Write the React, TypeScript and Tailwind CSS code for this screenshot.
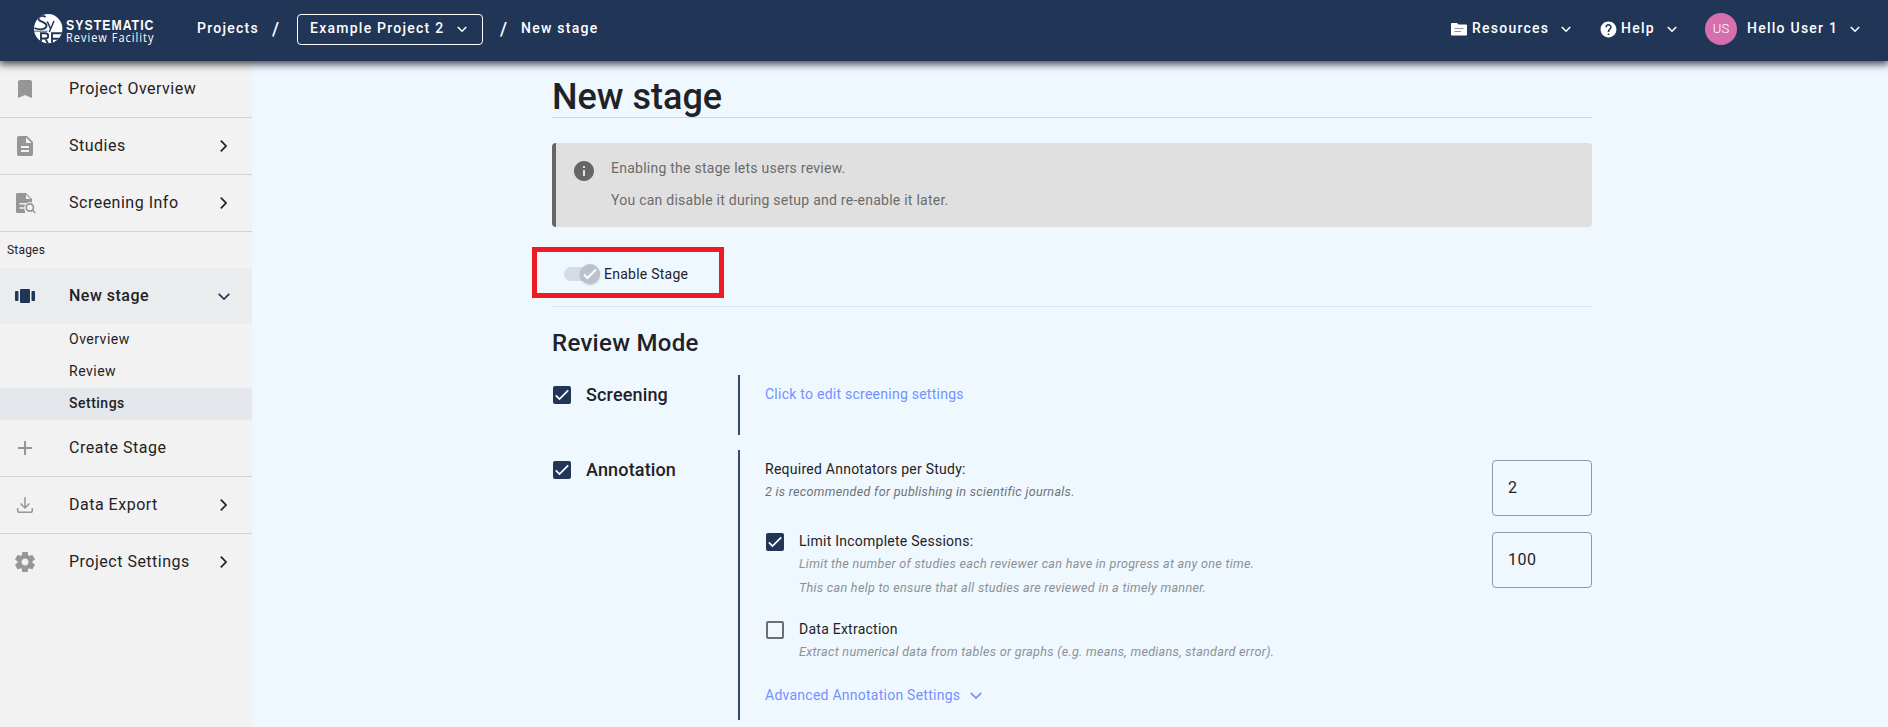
import React from "react";
import {
  MdBookmark,
  MdDescription,
  MdAdd,
  MdInfo,
  MdHelp,
} from "react-icons/md";

function Chevron({ dir, className = "" }: { dir: "down" | "right"; className?: string }) {
  const w = dir === "down" ? 12 : 7;
  const h = dir === "down" ? 7 : 12;
  return (
    <svg width={w} height={h} viewBox={`0 0 ${w} ${h}`} fill="none" stroke="currentColor" strokeWidth="1.7" className={className}>
      <path d={dir === "down" ? "M.7.8 6 6 11.3.8" : "M.8.7 6 6 .8 11.3"} />
    </svg>
  );
}

function SmallChevron() {
  return (
    <svg width="10" height="7" viewBox="0 0 10 7" fill="none" stroke="currentColor" strokeWidth="1.6">
      <path d="M.8 1 5 5.2 9.2 1" />
    </svg>
  );
}

function Logo() {
  return (
    <svg width="124" height="40" viewBox="0 -3 124 40" className="shrink-0 overflow-visible">
      <clipPath id="disc">
        <ellipse cx="14.2" cy="16.7" rx="14.2" ry="14.6" />
      </clipPath>
      <ellipse cx="14.2" cy="16.7" rx="14.2" ry="14.6" fill="#fff" />
      <g clipPath="url(#disc)" fill="none" stroke="#213557" strokeWidth="1.9">
        <path d="M11.500 5C8.500 2.800 3.500 4.300 4.800 7.700c1.500 2.500 7.700 2.100 7.700 5.900 0 4-7.500 4.700-12 2.400" />
        <path d="M13.300 9.500 16.500 16.500M20 9l-4.700 11" strokeWidth="1.500" />
        <path d="M7 33V21.300h4.200c4 0 4 5.200 0 5.200H7m4.200 0 3.300 6M18 33V21.300H29M18 26.700H28" />
        <path d="M0 19.200h13.500" strokeWidth=".8" />
      </g>
      <text x="32" y="18" fill="#fff" fontFamily="Liberation Sans, sans-serif" fontWeight="700" fontSize="14.5" textLength="88.5" lengthAdjust="spacingAndGlyphs">SYSTEMATIC</text>
      <text x="32" y="29.8" fill="#fff" fontFamily="Open Sans, sans-serif" fontSize="13.5" textLength="88.5" lengthAdjust="spacingAndGlyphs">Review Facility</text>
    </svg>
  );
}

function FolderLines({ className = "" }: { className?: string }) {
  return (
    <svg width="16" height="13" viewBox="0 0 16 13" className={className}>
      <path d="M.8 0H6l1.500 1.500h7.700c.5 0 .8.300.8.800v9.400c0 .5-.3.800-.8.800H.8c-.5 0-.8-.3-.8-.8V.8C0 .300.300 0 .8 0z" fill="#fff" />
      <path d="M3.500 5.500h9M3.500 8.500h6.500" stroke="#8b95a8" strokeWidth="1.100" />
    </svg>
  );
}

function Header() {
  return (
    <header className="relative z-10 flex h-[61px] shrink-0 items-center bg-[#213557] pb-[3px] text-sm font-medium tracking-[1.25px] text-white shadow-[0_2px_8px_1px_rgba(0,0,0,0.75)]">
      <div className="ml-[34px] flex w-[163px]">
        <Logo />
      </div>
      <span className="w-[75px] pb-[2px]">Projects</span>
      <span className="w-[25px] text-lg">/</span>
      <button className="flex h-[31px] w-[186px] items-center justify-between rounded-[4px] border border-white pl-3 pr-[15px] tracking-[1.25px]">
        <span className="pb-[2px]">Example Project 2</span>
        <SmallChevron />
      </button>
      <span className="ml-[17px] w-[21px] text-lg">/</span>
      <span className="pb-[2px]">New stage</span>
      <div className="ml-auto flex items-center">
        <FolderLines className="mr-[5px]" />
        <span className="w-[89px] pb-[2px]">Resources</span>
        <SmallChevron />
        <MdHelp className="ml-7 mr-[3px] size-[19px]" />
        <span className="w-[46px] pb-[2px]">Help</span>
        <SmallChevron />
        <span className="ml-7 mr-[10px] flex size-8 items-center justify-center rounded-full bg-[#d76fae] text-[13px] font-light tracking-normal">US</span>
        <span className="w-[103px] pb-[2px]">Hello User 1</span>
        <SmallChevron />
        <span className="w-7" />
      </div>
    </header>
  );
}

function DocSearch() {
  return (
    <svg width="24" height="24" viewBox="0 0 24 24">
      <path d="M4.500 2H13l6 6v5H13.500L11 16l1 4.500V22H4.500C3.600 22 3 21.400 3 20.500v-17C3 2.600 3.600 2 4.500 2z" fill="currentColor" />
      <path d="M13 3.500V8h4.500z" fill="#f2f2f2" />
      <path d="M6.500 12.700h7M6.500 17h5" stroke="#f2f2f2" strokeWidth="1.600" />
      <circle cx="16.800" cy="16.500" r="5.400" fill="#f2f2f2" />
      <circle cx="16.800" cy="16.500" r="3.600" fill="none" stroke="currentColor" strokeWidth="1.700" />
      <path d="m19.300 19 3 3" stroke="currentColor" strokeWidth="1.700" />
    </svg>
  );
}

function TrayDown() {
  return (
    <svg width="24" height="24" viewBox="0 0 24 24" fill="none" stroke="currentColor" strokeWidth="1.5">
      <path d="M12 4v10.500M7.500 10.500 12 15l4.500-4.500M4.700 15v2.800a1.500 1.500 0 0 0 1.500 1.500h11.600a1.500 1.500 0 0 0 1.500-1.500V15" />
    </svg>
  );
}

function Gear() {
  return (
    <svg width="24" height="24" viewBox="0 -960 960 960" fill="currentColor">
      <path d="m370-80-16-128q-13-5-24.5-12T307-235l-119 50L78-375l103-78q-1-7-1-13.5v-27q0-6.500 1-13.500L78-585l110-190 119 50q11-8 23-15t24-12l16-128h220l16 128q13 5 24.500 12t22.500 15l119-50 110 190-103 78q1 7 1 13.500v27q0 6.500-2 13.500l103 78-110 190-118-50q-11 8-23 15t-24 12L590-80H370Zm112-260q58 0 99-41t41-99q0-58-41-99t-99-41q-59 0-99.500 41T342-480q0 58 40.500 99t99.500 41Z" />
    </svg>
  );
}

function Carousel() {
  return (
    <svg width="24" height="24" viewBox="0 0 24 24" fill="#213557" className="mr-8">
      <rect x="7" y="5" width="10" height="14" rx="1" />
      <rect x="2" y="7" width="3.5" height="10" rx="1" />
      <rect x="18.500" y="7" width="3.500" height="10" rx="1" />
    </svg>
  );
}

function NavRow({ icon, label, chevron, line }: { icon: React.ReactNode; label: string; chevron?: boolean; line?: boolean }) {
  return (
    <div className={line ? "border-b border-[#d3d3d3]" : ""}>
      <div className="flex h-14 items-center pl-[13px] pr-[25px]">
        <span className="mr-8 flex size-6 items-center justify-center text-[#969696]">{icon}</span>
        <span className="grow text-base tracking-[0.5px]">{label}</span>
        {chevron && <Chevron dir="right" />}
      </div>
    </div>
  );
}

function Sidebar() {
  return (
    <nav className="w-[252px] shrink-0 bg-[#f2f2f2]">
      <NavRow icon={<MdBookmark size={24} />} label="Project Overview" line />
      <NavRow icon={<MdDescription size={24} />} label="Studies" chevron line />
      <NavRow icon={<DocSearch />} label="Screening Info" chevron line />
      <div className="flex h-9 items-center pl-[7px] text-xs tracking-[0.2px]">Stages</div>
      <div className="flex h-14 items-center rounded-r bg-[#ebecee] pl-[13px] pr-[22px]">
        <Carousel />
        <span className="grow text-base font-medium tracking-[0.5px]">New stage</span>
        <Chevron dir="down" className="text-[#213557]" />
      </div>
      <div className="text-sm tracking-[0.5px]">
        <div className="flex h-8 items-center pb-[2px] pl-[69px]">Overview</div>
        <div className="flex h-8 items-center pb-[2px] pl-[69px]">Review</div>
        <div className="flex h-8 items-center rounded-r bg-[#e4e7ec] pb-[2px] pl-[69px] font-medium">Settings</div>
      </div>
      <NavRow icon={<MdAdd size={24} />} label="Create Stage" line />
      <NavRow icon={<TrayDown />} label="Data Export" chevron line />
      <NavRow icon={<Gear />} label="Project Settings" chevron />
    </nav>
  );
}

function Checkbox({ checked }: { checked?: boolean }) {
  if (!checked) return <span className="size-[18px] shrink-0 rounded-[2px] border-2 border-[#6d7073]" />;
  return (
    <span className="flex size-[18px] shrink-0 items-center justify-center rounded-[2px] bg-[#213557]">
      <svg width="14" height="14" viewBox="0 0 14 14" fill="none" stroke="#fff" strokeWidth="1.7">
        <path d="m.8 7.300 3.700 3.700L13.200 2.300" />
      </svg>
    </span>
  );
}

function NumberBox({ value }: { value: string }) {
  return (
    <div className="flex h-14 w-[100px] items-center rounded-[4px] border border-[#92979d] pl-[15px] text-base tracking-[0.5px]">{value}</div>
  );
}

function EnableStage() {
  return (
    <div className="-ml-5 mt-5 flex h-[51px] w-[192px] items-center border-[5px] border-[#ed1c24] pl-[27px] pt-[3px]">
      <span className="flex h-[14px] w-[36px] items-center justify-end rounded-full bg-[#d7dbe3]">
        <span className="flex size-5 shrink-0 items-center justify-center rounded-full bg-[#bcc1cb] shadow-[0_1px_2px_rgba(0,0,0,0.2)]">
          <svg width="14" height="14" viewBox="0 0 14 14" fill="none" stroke="#fff" strokeWidth="2">
            <path d="m1 7.500 3.500 3.500L13 2.500" />
          </svg>
        </span>
      </span>
      <span className="ml-1 pb-px text-sm tracking-[0.25px]">Enable Stage</span>
    </div>
  );
}

function Main() {
  return (
    <main className="ml-[300px] w-[1040px] shrink-0">
      <h1 className="h-[57px] border-b border-[#cfd8df] pt-[11px] text-4xl font-medium leading-[50px]">New stage</h1>
      <section className="mt-[25px] flex h-[84px] rounded-[4px] border-l-4 border-[#666] bg-[#e0e0e0] text-sm tracking-[0.25px] text-[#6b6b6b]">
        <MdInfo size={24} className="ml-4 mt-4 text-[#666]" />
        <div className="ml-[15px] mt-[9px] leading-8">
          <p>Enabling the stage lets users review.</p>
          <p>You can disable it during setup and re-enable it later.</p>
        </div>
      </section>
      <EnableStage />
      <div className="mt-2 h-px bg-[#dde6ee]" />
      <h2 className="mt-5 text-2xl font-medium leading-8 tracking-[0.3px]">Review Mode</h2>
      <section className="mt-4 flex h-[60px]">
        <div className="flex h-10 w-[186px] items-center pl-px text-lg font-medium tracking-[0.15px]">
          <Checkbox checked />
          <span className="ml-[15px]">Screening</span>
        </div>
        <div className="border-l-2 border-[#37496a] pl-[25px] text-sm leading-[38px] tracking-[0.25px] text-[#7491ff]">
          Click to edit screening settings
        </div>
      </section>
      <section className="mt-[15px] flex h-[270px]">
        <div className="flex h-10 w-[186px] items-center pl-px text-lg font-medium tracking-[0.15px]">
          <Checkbox checked />
          <span className="ml-[15px]">Annotation</span>
        </div>
        <div className="flex grow flex-col border-l-2 border-[#37496a] pl-[25px] text-sm tracking-[0.25px]">
          <div className="flex h-[82px] justify-between pt-[10px]">
            <div>
              <p className="leading-[18px]">Required Annotators per Study:</p>
              <p className="mt-1 text-[12.6px] italic leading-5 tracking-[0.29px] text-[#6f7377]">2 is recommended for publishing in scientific journals.</p>
            </div>
            <NumberBox value="2" />
          </div>
          <div className="flex h-[88px]">
            <span className="ml-px mt-px"><Checkbox checked /></span>
            <div className="ml-[15px] grow">
              <p className="leading-[18px]">Limit Incomplete Sessions:</p>
              <div className="mt-[2px] text-[12.6px] italic leading-6 tracking-[0.29px] text-[#8c9196]">
                <p>Limit the number of studies each reviewer can have in progress at any one time.</p>
                <p>This can help to ensure that all studies are reviewed in a timely manner.</p>
              </div>
            </div>
            <NumberBox value="100" />
          </div>
          <div className="flex h-[65px]">
            <span className="ml-px mt-px flex"><Checkbox /></span>
            <div className="ml-[15px]">
              <p className="leading-[18px]">Data Extraction</p>
              <p className="mt-[2px] text-[12.6px] italic leading-6 tracking-[0.29px] text-[#8c9196]">Extract numerical data from tables or graphs (e.g. means, medians, standard error).</p>
            </div>
          </div>
          <div className="flex items-center text-[#7491ff]">
            Advanced Annotation Settings
            <Chevron dir="down" className="ml-[10px]" />
          </div>
        </div>
      </section>
    </main>
  );
}

export default function App() {
  return (
    <div className="flex h-[727px] w-[1888px] flex-col overflow-hidden bg-[#eff8ff] font-[Roboto,sans-serif] text-[#1f2226]">
      <Header />
      <div className="flex grow">
        <Sidebar />
        <Main />
      </div>
    </div>
  );
}
